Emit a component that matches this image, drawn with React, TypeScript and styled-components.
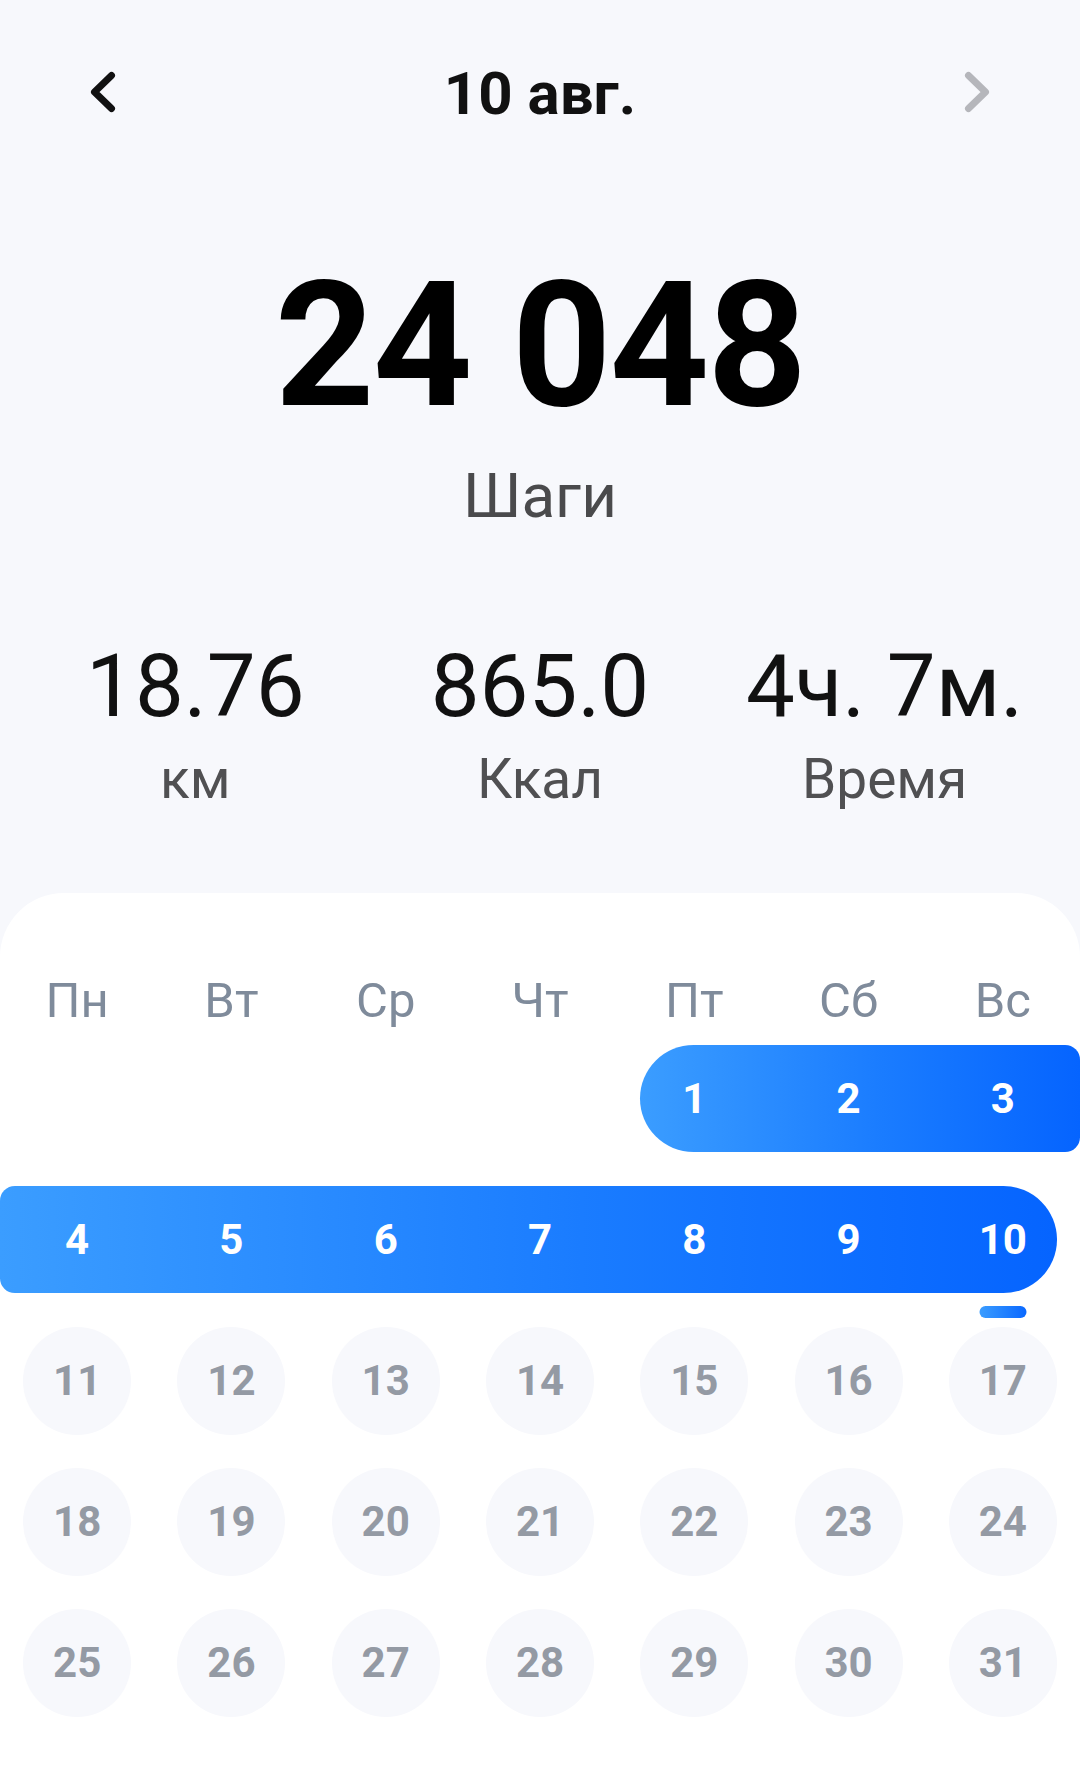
import React from 'react';
import styled, {createGlobalStyle} from 'styled-components';

const GlobalStyle = createGlobalStyle`
  html, body {
    margin: 0;
    padding: 0;
    background: #f7f8fc;
  }
  body {
    font-family: Roboto, "Noto Sans", "Liberation Sans", sans-serif;
  }
`

type Week = (number | null)[]

const weekDays = ['Пн', 'Вт', 'Ср', 'Чт', 'Пт', 'Сб', 'Вс']

const weeks: Week[] = [
    [null, null, null, null, 1, 2, 3],
    [4, 5, 6, 7, 8, 9, 10],
    [11, 12, 13, 14, 15, 16, 17],
    [18, 19, 20, 21, 22, 23, 24],
    [25, 26, 27, 28, 29, 30, 31],
]

const rangeStart = 1
const rangeEnd = 10
const selectedDay = 10

const stats = [
    {value: '18.76', label: 'км'},
    {value: '865.0', label: 'Ккал'},
    {value: '4ч. 7м.', label: 'Время'},
]

const inRange = (day: number | null) => day !== null && day >= rangeStart && day <= rangeEnd

const Chevron = ({dir, color}: { dir: 'left' | 'right', color: string }) => (
    <svg width="48" height="48" viewBox="0 0 48 48" fill="none">
        <polyline
            points={dir === 'left' ? '32.5,7.5 15.5,24 32.5,40.5' : '15.5,7.5 32.5,24 15.5,40.5'}
            stroke={color}
            strokeWidth="7"
            strokeLinecap="round"
            strokeLinejoin="round"
        />
    </svg>
)

const WeekRow = ({week}: { week: Week }) => {
    const rangeCols = week
        .map((day, i) => (inRange(day) ? i : -1))
        .filter(i => i >= 0)
    const first = rangeCols[0]
    const last = rangeCols[rangeCols.length - 1]

    return (
        <WeekGrid>
            {rangeCols.length > 0 && (
                <RangePill
                    $from={first + 1}
                    $to={last + 2}
                    $openLeft={week[first] !== rangeStart}
                    $openRight={week[last] !== rangeEnd}
                />
            )}
            {week.map((day, i) => (
                <DayCell key={i} $col={i + 1}>
                    {day !== null && (
                        <DayCircle $active={inRange(day)}>
                            {day}
                            {day === selectedDay && <SelectedMark/>}
                        </DayCircle>
                    )}
                </DayCell>
            ))}
        </WeekGrid>
    )
}

const App = () => {
    return (
        <Screen>
            <GlobalStyle/>
            <Header>
                <NavButton $side="left">
                    <Chevron dir="left" color="#111111"/>
                </NavButton>
                <Title>10 авг.</Title>
                <NavButton $side="right">
                    <Chevron dir="right" color="#b5b6bb"/>
                </NavButton>
            </Header>

            <Steps>24 048</Steps>
            <StepsLabel>Шаги</StepsLabel>

            <StatsRow>
                {stats.map(stat => (
                    <StatItem key={stat.label}>
                        <StatValue>{stat.value}</StatValue>
                        <StatLabel>{stat.label}</StatLabel>
                    </StatItem>
                ))}
            </StatsRow>

            <CalendarCard>
                <WeekDaysRow>
                    {weekDays.map(d => <WeekDay key={d}>{d}</WeekDay>)}
                </WeekDaysRow>
                <Weeks>
                    {weeks.map((week, i) => <WeekRow key={i} week={week}/>)}
                </Weeks>
            </CalendarCard>
        </Screen>
    );
};

const Screen = styled.div`
  width: 1080px;
  min-height: 1770px;
  display: flex;
  flex-direction: column;
  background: #f7f8fc;
`
const Header = styled.div`
  height: 60px;
  margin-top: 64px;
  padding: 0 79px;
  display: grid;
  grid-template-columns: 1fr auto 1fr;
  align-items: start;
`
const NavButton = styled.div<{ $side: 'left' | 'right' }>`
  width: 48px;
  height: 48px;
  margin-top: 4px;
  justify-self: ${({$side}) => ($side === 'left' ? 'start' : 'end')};
  cursor: pointer;
`
const Title = styled.div`
  font-size: 60px;
  line-height: 1;
  font-weight: 700;
  color: #111111;
`
const Steps = styled.div`
  margin-top: 135px;
  font-size: 174px;
  line-height: 1;
  font-weight: 700;
  color: #000000;
  text-align: center;
  letter-spacing: -2px;
`
const StepsLabel = styled.div`
  margin-top: 32px;
  font-size: 62px;
  line-height: 1;
  color: #4a4a4c;
  text-align: center;
`
const StatsRow = styled.div`
  margin-top: 116px;
  padding: 0 23px;
  display: grid;
  grid-template-columns: repeat(3, 1fr);
`
const StatItem = styled.div`
  display: flex;
  flex-direction: column;
  align-items: center;
  gap: 22px;
`
const StatValue = styled.div`
  font-size: 87px;
  line-height: 1;
  color: #111111;
  white-space: nowrap;
`
const StatLabel = styled.div`
  font-size: 55px;
  line-height: 1;
  color: #505052;
`
const CalendarCard = styled.div`
  flex: 1;
  margin-top: 86px;
  padding-top: 83px;
  background: #ffffff;
  border-radius: 64px 64px 0 0;
`
const WeekDaysRow = styled.div`
  display: grid;
  grid-template-columns: repeat(7, 1fr);
`
const WeekDay = styled.div`
  font-size: 49px;
  line-height: 1;
  color: #7f8b9b;
  text-align: center;
`
const Weeks = styled.div`
  margin-top: 20px;
  display: flex;
  flex-direction: column;
  gap: 34px;
`
const WeekGrid = styled.div`
  display: grid;
  grid-template-columns: repeat(7, 1fr);
  grid-template-rows: 107px;
`
const RangePill = styled.div<{ $from: number, $to: number, $openLeft: boolean, $openRight: boolean }>`
  grid-row: 1;
  grid-column: ${({$from, $to}) => `${$from} / ${$to}`};
  margin-left: ${({$openLeft}) => ($openLeft ? '0' : '23px')};
  margin-right: ${({$openRight}) => ($openRight ? '0' : '23px')};
  border-radius: ${({$openLeft, $openRight}) =>
    `${$openLeft ? '15px' : '54px'} ${$openRight ? '15px' : '54px'} ${$openRight ? '15px' : '54px'} ${$openLeft ? '15px' : '54px'}`};
  background: linear-gradient(90deg, #3b9dff 0%, #1a7cff 55%, #0564ff 100%);
`
const DayCell = styled.div<{ $col: number }>`
  grid-row: 1;
  grid-column: ${({$col}) => $col};
  display: flex;
  align-items: center;
  justify-content: center;
  position: relative;
`
const DayCircle = styled.div<{ $active: boolean }>`
  position: relative;
  width: 108px;
  height: 108px;
  border-radius: 50%;
  display: flex;
  align-items: center;
  justify-content: center;
  font-size: 42px;
  line-height: 1;
  font-weight: 700;
  color: ${({$active}) => ($active ? '#ffffff' : '#949aa4')};
  background: ${({$active}) => ($active ? 'transparent' : '#f7f8fc')};
`
const SelectedMark = styled.span`
  position: absolute;
  left: 50%;
  top: calc(100% + 12px);
  width: 47px;
  height: 12px;
  transform: translateX(-50%);
  border-radius: 6px;
  background: linear-gradient(90deg, #3b9dff, #0a68ff);
`

export default App;
